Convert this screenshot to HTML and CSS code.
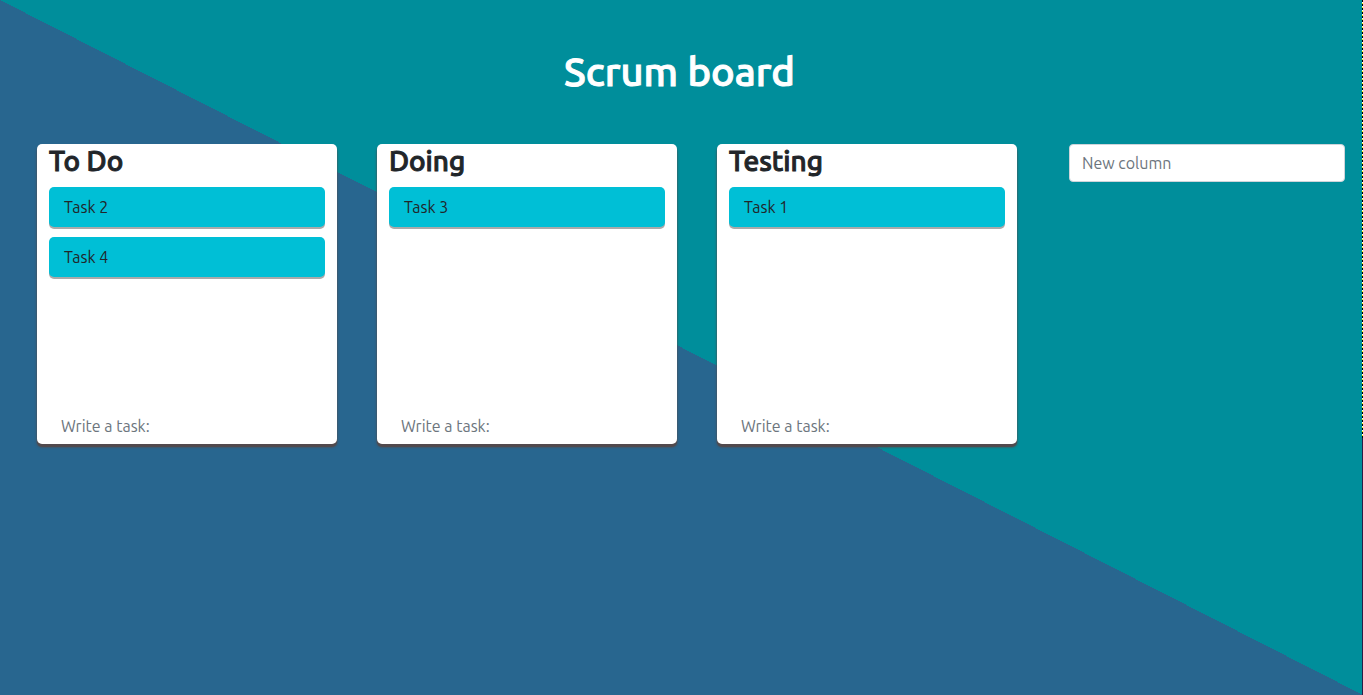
FILE: index.html
```html
<!DOCTYPE html>
<html lang="en">
<head>
<meta charset="utf-8">
<meta name="viewport" content="width=device-width, initial-scale=1">
<title>Scrum board</title>
<link rel="stylesheet" href="styles.css">
</head>
<body>
<main class="page">
  <h1 class="title">Scrum board</h1>
  <div class="board">
    <section class="column">
      <h3 class="column-title">To Do</h3>
      <ul class="tasks">
        <li class="task">Task 2</li>
        <li class="task">Task 4</li>
      </ul>
      <input class="new-task" type="text" placeholder="Write a task:" aria-label="Write a task for To Do">
    </section>
    <section class="column">
      <h3 class="column-title">Doing</h3>
      <ul class="tasks">
        <li class="task">Task 3</li>
      </ul>
      <input class="new-task" type="text" placeholder="Write a task:" aria-label="Write a task for Doing">
    </section>
    <section class="column">
      <h3 class="column-title">Testing</h3>
      <ul class="tasks">
        <li class="task">Task 1</li>
      </ul>
      <input class="new-task" type="text" placeholder="Write a task:" aria-label="Write a task for Testing">
    </section>
    <form class="add-column">
      <input class="new-column" type="text" placeholder="New column" aria-label="New column">
    </form>
  </div>
</main>
</body>
</html>
```
FILE: styles.css
```css
*,
*::before,
*::after {
  box-sizing: border-box;
}

body {
  margin: 0;
  min-height: 100vh;
  font-family: Ubuntu, "Noto Sans", "Open Sans", sans-serif;
  font-size: 16px;
  line-height: 24px;
  color: #212529;
  background: linear-gradient(to right top, #28668f 50%, #008e9b 50%) no-repeat;
}

/* Thin strip along the window's right edge */
body::after {
  content: "";
  position: fixed;
  top: 0;
  right: 0;
  bottom: 0;
  width: 1px;
  background:
    repeating-linear-gradient(#000 0 2px, #fff 2px 3px, #ff0 3px 4px) top / 1px 63% no-repeat,
    #2c1b47;
}

.page {
  padding: 48px 18px 48px 37px;
}

.title {
  margin: 0 0 48px;
  padding-right: 23px;
  font-size: 40px;
  font-weight: 500;
  line-height: 48px;
  text-align: center;
  color: #fff;
  -webkit-text-stroke: 1px #fff;
}

.board {
  display: flex;
  align-items: flex-start;
  gap: 40px;
}

.column {
  display: flex;
  flex-direction: column;
  flex: 0 0 300px;
  min-height: 300px;
  padding: 0 12px;
  background: #fff;
  border-radius: 5px;
  box-shadow: 0 3px 3px #524a4d, 0 3px 1px #524a4d;
}

.column-title {
  margin: 0 0 9px;
  font-size: 28px;
  font-weight: 500;
  line-height: 34px;
  -webkit-text-stroke: 1px #212529;
}

.tasks {
  display: flex;
  flex-direction: column;
  flex: 1;
  gap: 10px;
  margin: 0;
  padding: 0;
  list-style: none;
}

.task {
  padding: 8px 15px;
  background: #00bfd6;
  border-radius: 5px;
  box-shadow: 0 2px 0 #aaa;
}

.new-task,
.new-column {
  width: 100%;
  padding: 6px 12px;
  font: inherit;
  color: #495057;
  border-radius: 4px;
}

.new-task {
  background: none;
  border: 0;
}

.new-column {
  display: block;
  background: #fff;
  border: 1px solid #ced4da;
}

.new-task::placeholder,
.new-column::placeholder {
  color: #6c757d;
  opacity: 1;
}

.add-column {
  flex: 1;
  padding-left: 12px;
}
```
